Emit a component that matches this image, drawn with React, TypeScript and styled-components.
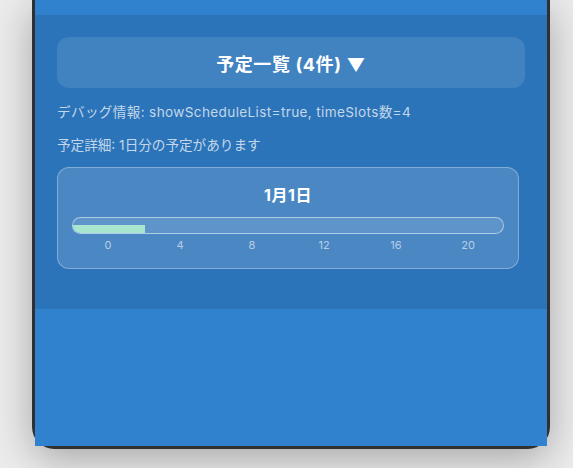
import React from "react";
import styled, { createGlobalStyle } from "styled-components";

const GlobalStyle = createGlobalStyle`
  html, body {
    margin: 0;
    padding: 0;
    height: 468px;
    overflow: hidden;
    background: #ececec;
    font-family: Inter, "Noto Sans CJK JP", sans-serif;
  }
`;

const Page = styled.div`
  padding-left: 32px;
`;

const Frame = styled.div`
  width: 512px;
  height: 446px;
  border: 3px solid #303030;
  border-top: none;
  border-radius: 0 0 22px 22px;
  box-shadow: 0 10px 40px rgba(0, 0, 0, 0.3);
  display: flex;
  flex-direction: column;
`;

const Screen = styled.div`
  flex: 1;
  background: #3182ce;
  display: flex;
  flex-direction: column;
  padding-top: 15px;
`;

const Section = styled.section`
  background: rgba(0, 0, 0, 0.1);
  padding: 22px 22px 40px;
  display: flex;
  flex-direction: column;
  align-items: flex-start;
`;

const Toggle = styled.button`
  align-self: stretch;
  height: 51px;
  border: none;
  border-radius: 12px;
  background: rgba(255, 255, 255, 0.1);
  color: #ffffff;
  font-family: inherit;
  font-size: 18px;
  font-weight: 700;
  letter-spacing: 0.6px;
  display: flex;
  align-items: center;
  justify-content: center;
  padding: 0;
`;

const Note = styled.p<{ $top: number; $spacing?: number }>`
  margin: ${(p) => p.$top}px 0 0;
  font-size: 13.6px;
  line-height: 19px;
  letter-spacing: ${(p) => p.$spacing ?? 0}px;
  color: rgba(255, 255, 255, 0.72);
`;

const Card = styled.div`
  width: 432px;
  margin-top: 12px;
  padding: 16px 14px 15px;
  border: 1px solid rgba(255, 255, 255, 0.3);
  border-radius: 12px;
  background: rgba(255, 255, 255, 0.15);
  display: flex;
  flex-direction: column;
`;

const DayTitle = styled.h3`
  margin: 0;
  text-align: center;
  font-size: 16px;
  line-height: 22px;
  font-weight: 700;
  letter-spacing: 0.5px;
  color: #ffffff;
`;

const Bar = styled.div`
  position: relative;
  margin-top: 11px;
  height: 15px;
  border: 1px solid rgba(255, 255, 255, 0.5);
  border-radius: 9px;
  background: rgba(255, 255, 255, 0.1);
  overflow: hidden;
`;

const Slot = styled.div`
  position: absolute;
  bottom: 0;
  height: 8px;
  background: #a8e6cf;
`;

const Ticks = styled.div`
  margin-top: 4px;
  display: flex;
`;

const Tick = styled.span`
  flex: 1;
  text-align: center;
  font-size: 11px;
  line-height: 15px;
  color: rgba(255, 255, 255, 0.6);
`;

const Rest = styled.div`
  flex: 1;
`;

const slots = [{ start: 0, end: 4 }];
const hours = [0, 4, 8, 12, 16, 20];

export default function App() {
  return (
    <>
      <GlobalStyle />
      <Page>
        <Frame>
          <Screen>
            <Section>
              <Toggle>予定一覧 (4件) ▼</Toggle>
              <Note $top={15} $spacing={0.35}>
                デバッグ情報: showScheduleList=true, timeSlots数=4
              </Note>
              <Note $top={14}>予定詳細: 1日分の予定があります</Note>
              <Card>
                <DayTitle>1月1日</DayTitle>
                <Bar>
                  {slots.map((s, i) => (
                    <Slot
                      key={i}
                      style={{
                        left: `${(s.start / 24) * 100}%`,
                        width: `${((s.end - s.start) / 24) * 100}%`,
                      }}
                    />
                  ))}
                </Bar>
                <Ticks>
                  {hours.map((h) => (
                    <Tick key={h}>{h}</Tick>
                  ))}
                </Ticks>
              </Card>
            </Section>
            <Rest />
          </Screen>
        </Frame>
      </Page>
    </>
  );
}
